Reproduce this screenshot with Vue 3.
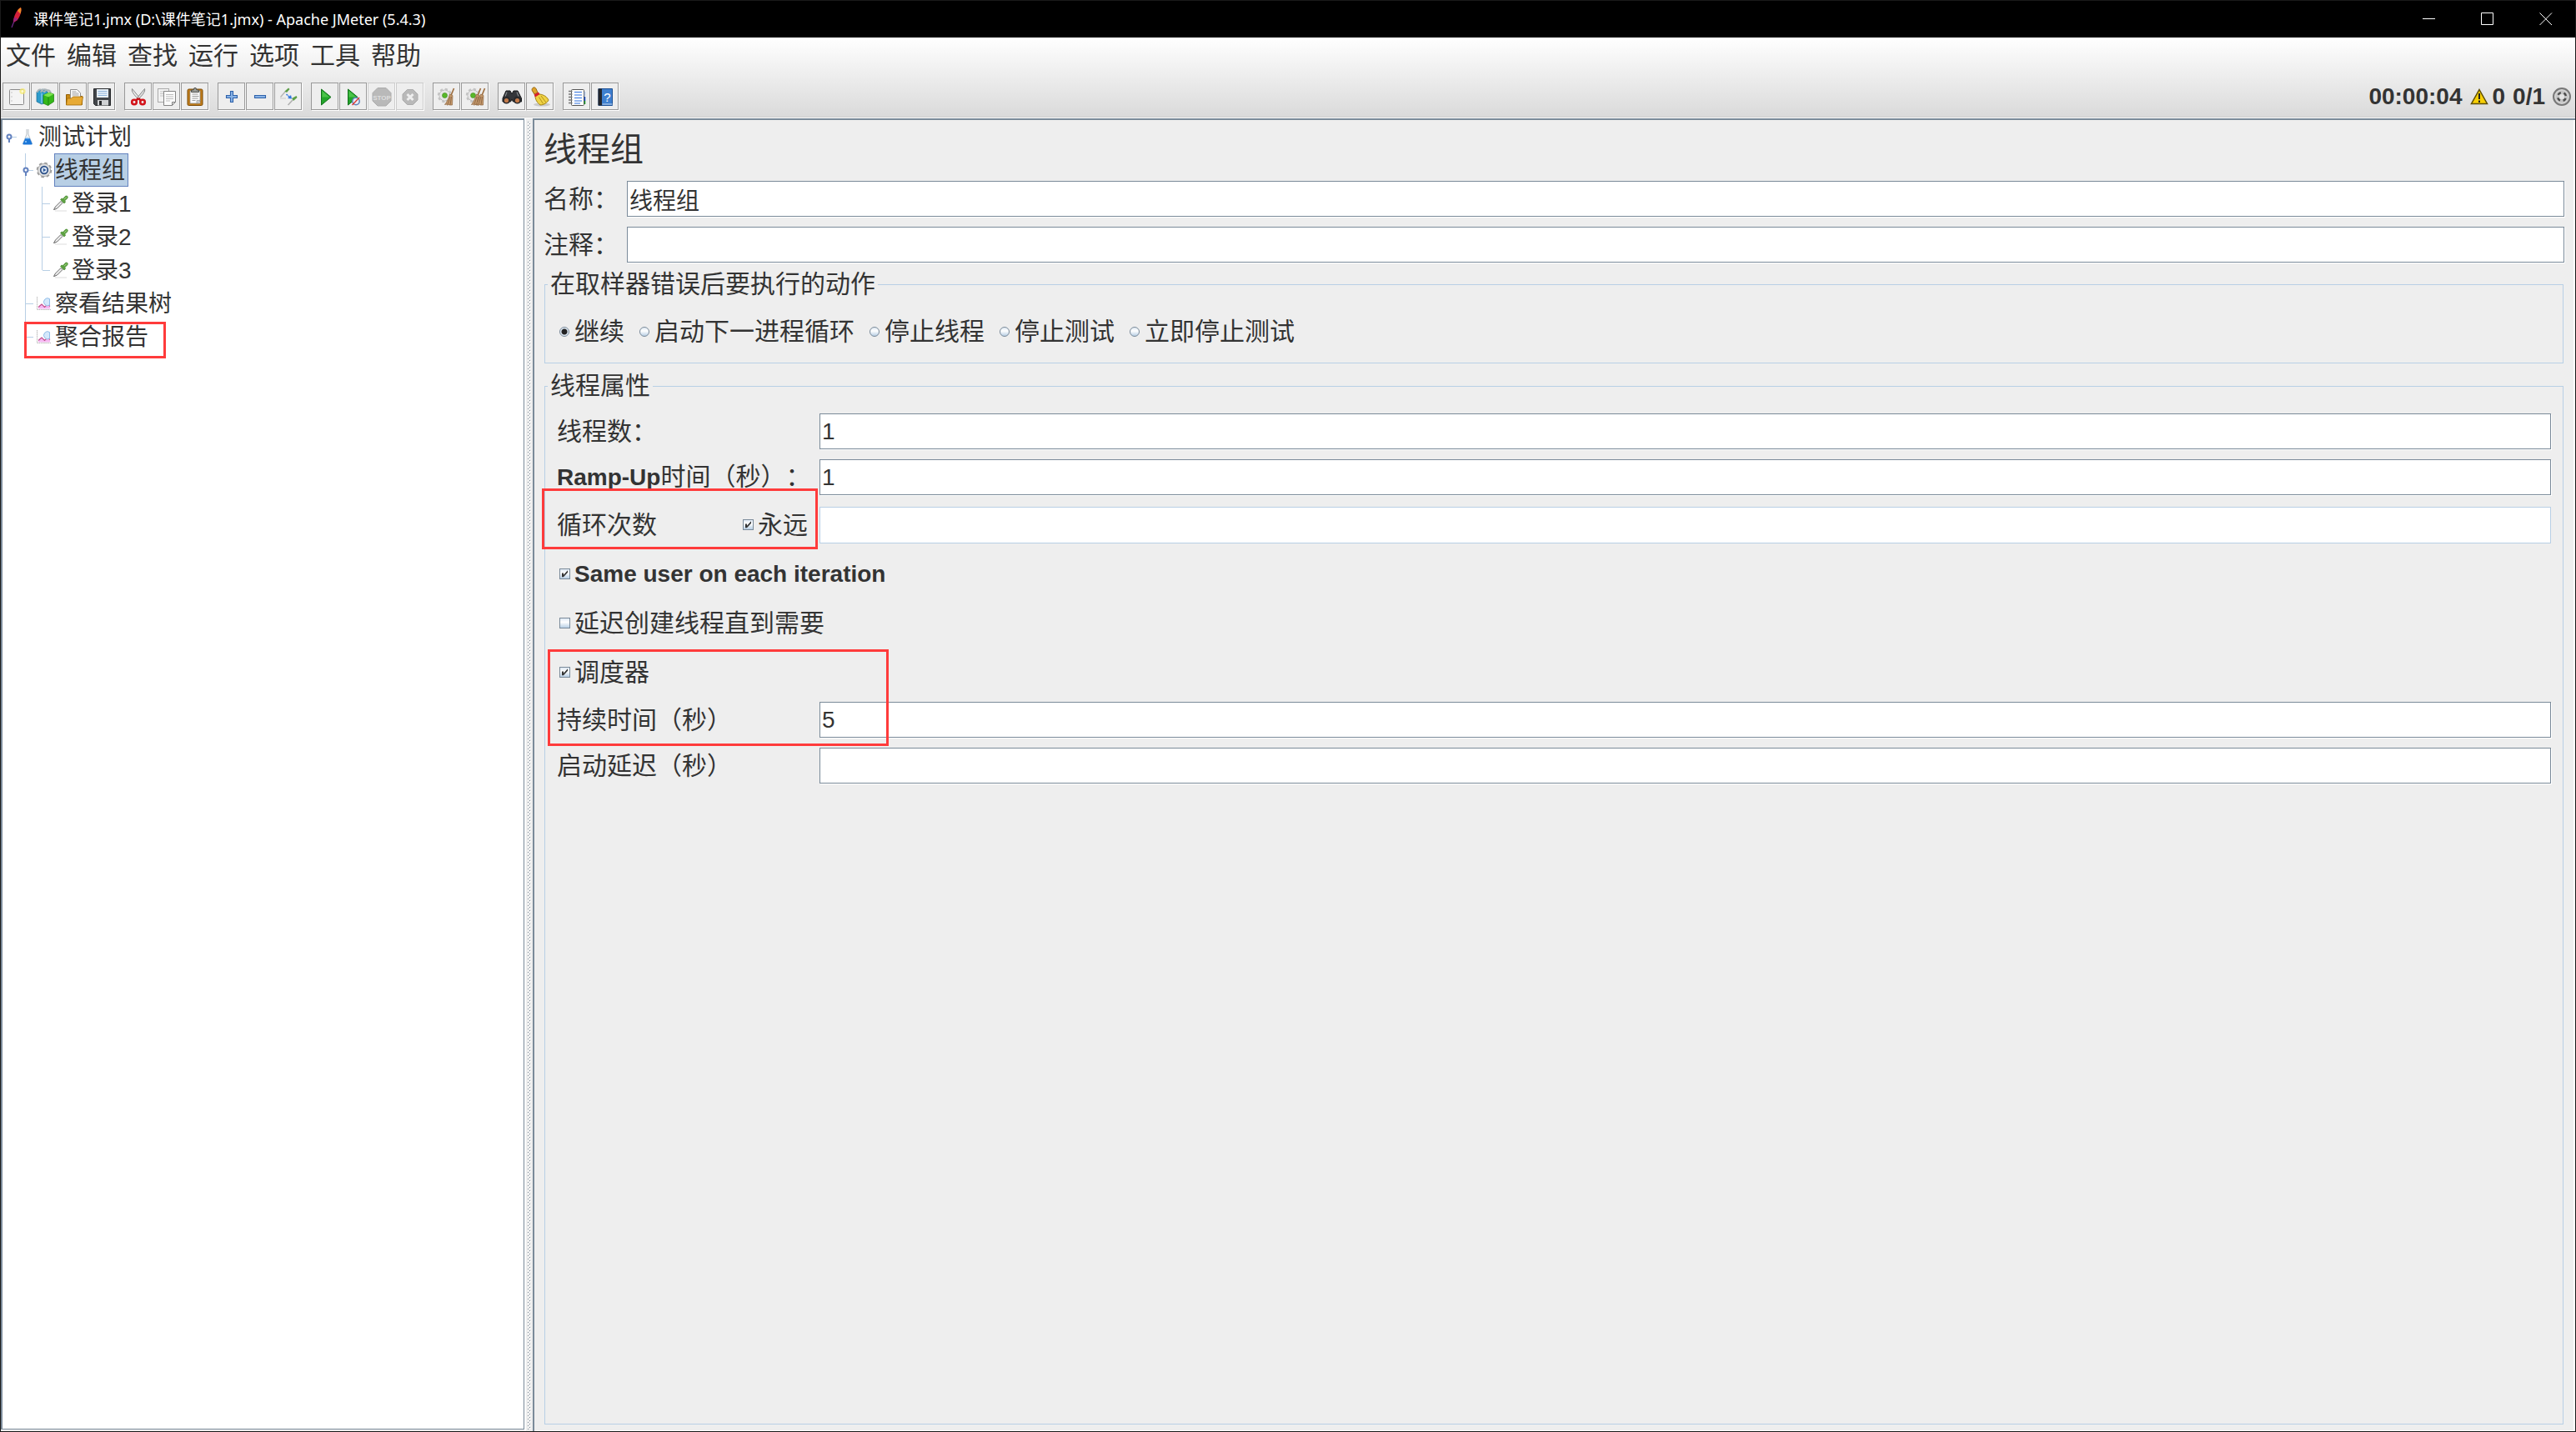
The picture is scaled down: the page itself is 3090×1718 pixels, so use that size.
<script setup>
import { ref } from 'vue'

const menus = ['文件', '编辑', '查找', '运行', '选项', '工具', '帮助']

const gear = '<g transform="translate(14.5 15.5)"><circle r="6.5" fill="#ececec" stroke="#b5b5b5"/><circle r="7.5" fill="none" stroke="#c4c4c4" stroke-width="2.4" stroke-dasharray="3.2 2.69"/><circle r="6" fill="#e6e6e6"/><circle r="3" fill="#58b82a" stroke="#3f8a1e" stroke-width=".6"/></g>'
const broom = (x) => `<g transform="translate(${x} 0)"><path d="M25.5 7L22 15.5" stroke="#9c6b3c" stroke-width="1.6"/><path d="M20.5 14l3.500 1.500-.5 11.500H20l-.5-1-1 1h-1.500l-.5-1.500-1 1H14.500c2.500-3 4.500-7.500 6-12.500z" fill="#c69a6d" stroke="#8d6540" stroke-width=".7"/><path d="M21 17l-3 9M22.5 17l-1.500 9.500" stroke="#7d5836" stroke-width=".7"/></g>`

const toolGroups = [
  [
    { name: '新建', svg: '<rect x="8.5" y="8.5" width="17" height="18" rx="1" fill="#f4f4f4" stroke="#8a8a8a"/><path d="M10.5 12h1M10.5 17h1M10.5 22h1" stroke="#999" stroke-width="1.2"/><circle cx="24" cy="10.5" r="3.6" fill="#f7e96b" opacity=".75"/><circle cx="24" cy="10.5" r="1.5" fill="#fffbd0"/>' },
    { name: '模板', svg: '<path d="M7 11l7-3 6 3v12l-7 3-6-3z" fill="#2d9ccc" stroke="#15698f" stroke-width=".7"/><path d="M8 12c0-4 5-5 7-1M12 12c1-5 7-5 9-1M16 12c1-4 6-4 8 0" fill="none" stroke="#aab4b8" stroke-width="1.8"/><path d="M13 13v12" stroke="#9fdcf5" stroke-width="1"/><path d="M15 15l7-3 5.500 2v9l-7 4.500-5.500-2.500z" fill="#35b81a" stroke="#18780b" stroke-width=".7"/><path d="M15 15l6 2.500 6.500-3.500-5.500-2z" fill="#7ce24f"/><path d="M21 17.5v10" stroke="#1b850e"/>' },
    { name: '打开', svg: '<path d="M8.5 14.500h4l1.500 2h13.500v10h-19z" fill="#c98a16" stroke="#936006"/><path d="M13.5 8.500h8l4 4V21h-12z" fill="#fafafa" stroke="#8f8f8f"/><path d="M15.5 11h5M15.5 13h8M15.5 15h8" stroke="#999" stroke-width=".9"/><path d="M8.5 27l1-8h5l2-2h12l-1.500 10z" fill="#e7aa35" stroke="#a26b08" stroke-width=".8"/>' },
    { name: '保存', svg: '<path d="M7.500 7.500h20v20H9.500l-2-2z" fill="#43464a" stroke="#26282b"/><rect x="11" y="8" width="14" height="10" fill="#e9f1f9"/><path d="M12.5 10.500h11M12.5 13h11M12.5 15.500h11" stroke="#8eb3d9"/><rect x="12" y="21" width="13" height="6.5" fill="#d0d2d4"/><rect x="14" y="22" width="3" height="5" fill="#2a2c2e"/>' },
  ],
  [
    { name: '剪切', svg: '<path d="M9.500 7.500c-1 3 2 7 7.500 12.500l1.500-1.500z" fill="#eee" stroke="#858585"/><path d="M24.500 7.500c1 3-2 7-7.500 12.500l-1.500-1.500z" fill="#e2e2e2" stroke="#858585"/><path d="M17 19l3.500 3M17 19l-3.500 3" stroke="#c50d14" stroke-width="2.5"/><ellipse cx="12" cy="23.5" rx="2.8" ry="2.7" fill="none" stroke="#d3141b" stroke-width="2.6"/><ellipse cx="22" cy="23.5" rx="2.8" ry="2.7" fill="none" stroke="#d3141b" stroke-width="2.6"/>' },
    { name: '复制', svg: '<rect x="6.5" y="7.5" width="13" height="16" fill="#f2f2f2" stroke="#aaa"/><path d="M9 11h8M9 13.500h4M9 16h4" stroke="#c5c5c5"/><path d="M13.5 10.500h14v13l-4 4h-10z" fill="#fafafa" stroke="#858585"/><path d="M16 14.500h9M16 17h9M16 19.500h9M16 22h5" stroke="#bdbdbd"/><path d="M23.5 27.500v-4h4z" fill="#ddd" stroke="#858585"/>' },
    { name: '粘贴', svg: '<rect x="8" y="8" width="18" height="19.5" rx="1.5" fill="#c07c1a" stroke="#7c4a05"/><path d="M11 10h12v15H11z" fill="#f9f9f9" stroke="#888" stroke-width=".7"/><path d="M13.5 14h7M13.5 16.500h8M13.5 19h7M13.5 21.500h4" stroke="#9c9c9c"/><path d="M19 25.500v-4h4.500z" fill="#d5d5d5" stroke="#888" stroke-width=".6"/><path d="M12.5 11.500V9h2.500l1-2.500h2L19 9h2.500v2.500z" fill="#9a9c98" stroke="#50524e"/>' },
  ],
  [
    { name: '展开', svg: '<path d="M15.5 10.500h3v5h5v3h-5v5h-3v-5h-5v-3h5z" fill="#8ab4e6" stroke="#2f62aa" stroke-width="1.1"/>' },
    { name: '折叠', svg: '<path d="M10.5 15.500h13v3h-13z" fill="#8ab4e6" stroke="#2f62aa" stroke-width="1.1"/>' },
    { name: '切换', svg: '<path d="M7.500 17.500l6-7" stroke="#b5b5b5" stroke-width="1.4"/><path d="M12.500 10.500l4.500-4 1.500 1.500-3.500 4z" fill="#5c9e47"/><path d="M7 19h7" stroke="#ccc"/><path d="M14.500 14l4 3.500" stroke="#2f75e0" stroke-width="1.5" stroke-dasharray="2 .8"/><path d="M21 19.500l-1-4.500-4 4z" fill="#2f75e0"/><path d="M16.500 27l5.500-6" stroke="#b0b0b0" stroke-width="1.6"/><path d="M21 19l5.500-3 1 2-4.500 4z" fill="#5c9e47"/>' },
  ],
  [
    { name: '启动', svg: '<path d="M12.5 8v19L24 17.500z" fill="#23a52b" stroke="#12711a"/><path d="M13.5 10v7.500H22z" fill="#58cd54" opacity=".75"/>' },
    { name: '不停顿开始', svg: '<path d="M10.5 8v19L22 17.500z" fill="#23a52b" stroke="#12711a"/><path d="M11.5 10v7.500H20z" fill="#58cd54" opacity=".75"/><circle cx="20" cy="22.5" r="4.2" fill="#e8edf7" stroke="#5f83bb" stroke-width="1.5"/><path d="M15.5 27l8.500-9" stroke="#e23a32" stroke-width="1.4"/>' },
    { name: '停止', disabled: true, svg: '<path d="M12 6.500h10l6 6v9.500l-6 6H12l-6-6v-9.500z" fill="#b9b9b9" stroke="#acacac"/><text x="17" y="21" text-anchor="middle" font-family="Liberation Sans" font-weight="700" font-size="8" fill="#dedede">STOP</text>' },
    { name: '关闭', disabled: true, svg: '<path d="M13.5 8.500h7l5.500 5.500v7l-5.500 5.500h-7L8 21v-7z" fill="#b9b9b9" stroke="#acacac"/><path d="M13.5 14l7 7M20.5 14l-7 7" stroke="#eee" stroke-width="3"/>' },
  ],
  [
    { name: '清除', svg: gear + broom(0) },
    { name: '清除全部', svg: gear + broom(-2) + broom(3) },
  ],
  [
    { name: '查找', svg: '<path d="M10 10h5l1.500 3h1L19 10h5l4.500 9v4h-10l-1.500-3-1.500 3H6v-4z" fill="#34363a" stroke="#17181a"/><circle cx="10.5" cy="21" r="4.5" fill="#292a2d"/><circle cx="23.5" cy="21" r="4.5" fill="#292a2d"/><circle cx="10.5" cy="21.5" r="2.6" fill="#c37a4a"/><circle cx="23.5" cy="21.5" r="2.6" fill="#c37a4a"/><path d="M11 11.500l-2 5M23 11.500l2 5" stroke="#85888d" stroke-width="1.2"/>' },
    { name: '重置查找', svg: '<ellipse cx="19" cy="26.5" rx="10" ry="2" fill="#c9c9c9"/><path d="M8 6.500c2-1.500 3.500 0 4 1l2 4.500-4 2-2.500-4c-.7-1-.5-2.500.5-3.500z" fill="#e0a32a" stroke="#956612"/><path d="M15 14c4 0 9 1.500 12 7-1 2.500-5 6-10 6-4-3-6-7-6-11z" fill="#efd245" stroke="#a58412"/><path d="M15.5 17.500l5 8M18 16l6 8" stroke="#b49319"/><path d="M9.500 14.500l5.500-3 1.500 2.500-5.500 3.500z" fill="#d8202b"/>' },
  ],
  [
    { name: '函数助手对话框', svg: '<rect x="10.5" y="8.5" width="15" height="19" rx="1" fill="#fff" stroke="#555"/><path d="M26.5 11v5" stroke="#b0c4e6" stroke-width="1.5"/><path d="M26.5 17v5" stroke="#1d4fc4" stroke-width="1.5"/><path d="M26.5 22v4" stroke="#1f9a30" stroke-width="1.5"/><path d="M14 11.500h9M14 15h9M14 18.500h9M14 22h9M14 25h7" stroke="#2f70dd" stroke-width="1.2"/><path d="M7 10.500h4.500M7 14h4.500M7 17.500h4.500M7 21h4.500M7 24.500h4.500" stroke="#777" stroke-width="1.5"/>' },
    { name: '帮助', svg: '<path d="M9 7.500h16.500v20H9z" fill="#3f80cf" stroke="#1c4f93"/><path d="M8.500 7.500H13v20H8.500z" fill="#22262d"/><path d="M13.5 26h12" stroke="#cfdcf0"/><text x="19.5" y="22.5" text-anchor="middle" font-family="Liberation Sans" font-size="15" fill="#fff">?</text>' },
  ],
]

const treeIcons = {
  plan: '<path d="M9 1v6L4.500 18.500h11L11 7V1" fill="#eef2f5" stroke="#b5bcc2" stroke-width=".9"/><path d="M7.300 12h5.400l2.800 6q.5 1.500-1 1.500h-9q-1.500 0-1-1.500z" fill="#1c77d8"/><ellipse cx="10" cy="12" rx="2.6" ry=".8" fill="#7cbcf5"/><circle cx="8" cy="16" r="1" fill="#9fd0fb"/>',
  group: '<circle cx="10" cy="10" r="8.3" fill="none" stroke="#9a9a9a" stroke-width="2" stroke-dasharray="3.6 2.92"/><circle cx="10" cy="10" r="7.6" fill="#e2e2e2" stroke="#a5a5a5" stroke-width=".9"/><circle cx="10" cy="10" r="4.3" fill="#dbe6f5" stroke="#2c4f86" stroke-width="1.7"/><path d="M8.800 7.700v4.600l3.600-2.300z" fill="#2f5b9e"/>',
  sampler: '<path d="M3 19h14" stroke="#ddd"/><path d="M1.500 17.500l2-3.500 6.500-6.500 2 2-6.500 6.500-3.500 1.500z" fill="#f0f0f0" stroke="#555" stroke-width=".9"/><path d="M9.500 5.500l4.500 4.500 1.500-1.500-.7-1.700 3.200-3c1-2-.5-3.500-2.500-2.500l-3 3.200-1.500-.5z" fill="#5da142" stroke="#4a8a33" stroke-width=".7"/><path d="M14 5l3-2.500" stroke="#a5dc86"/>',
  report: '<path d="M1.500 2v15.500H18" fill="none" stroke="#b9b9b9" stroke-dasharray="1.5 .7"/><path d="M3 16.500v-3l4-3 4 3.500 3-3 3 2v3.500z" fill="#f5b9f3"/><path d="M3 14.500l4-3.500 3.500 3.500 3.500-3.500 3 2.500" fill="none" stroke="#c2508a" stroke-width="1.1"/><path d="M16.500 4.500a4.500 4.500 0 1 0 0 7.500z" fill="#d5e8fb" stroke="#90bde8" stroke-width="1"/>',
}

// guides: one cell per depth level, drawn from left to right
const tree = [
  { text: '测试计划', icon: 'plan', guides: ['root'] },
  { text: '线程组', icon: 'group', guides: ['none', 'handle'], selected: true },
  { text: '登录1', icon: 'sampler', guides: ['none', 'line', 'tee'] },
  { text: '登录2', icon: 'sampler', guides: ['none', 'line', 'tee'] },
  { text: '登录3', icon: 'sampler', guides: ['none', 'line', 'end'] },
  { text: '察看结果树', icon: 'report', guides: ['none', 'tee'] },
  { text: '聚合报告', icon: 'report', guides: ['none', 'end'], marked: true },
]

const onErrorOptions = ['继续', '启动下一进程循环', '停止线程', '停止测试', '立即停止测试']
const onError = ref('继续')
const name = ref('线程组')
const comment = ref('')
const threads = ref('1')
const rampUp = ref('1')
const loops = ref('')
const forever = ref(true)
const sameUser = ref(true)
const delayed = ref(false)
const scheduler = ref(true)
const duration = ref('5')
const startDelay = ref('')
</script>

<template>
  <div class="window">
    <header class="titlebar">
      <svg class="feather" width="14" height="26" viewBox="0 0 14 26">
        <path d="M1 25L4.500 16" stroke="#6f2a8c" stroke-width="1.2" />
        <path d="M3 19C3 12 7 3 12 1c1.500 4-1 11-4.500 15.500z" fill="#d4203a" />
        <path d="M8 5c1.500-2.500 3-3.700 4-4 .9 2.400.3 5-.5 7.500z" fill="#f08a24" />
        <path d="M3 19c0-2.500.5-4.500 1.200-6.500l4.300 2-1 1.500z" fill="#97247c" />
      </svg>
      <h1 class="caption">课件笔记1.jmx (D:\课件笔记1.jmx) - Apache JMeter (5.4.3)</h1>
      <div class="window-buttons">
        <button type="button" aria-label="最小化"><svg width="16" height="16"><path d="M0 7.500h15" /></svg></button>
        <button type="button" aria-label="最大化"><svg width="16" height="16"><path d="M.5.5h14v14H.5z" /></svg></button>
        <button type="button" aria-label="关闭"><svg width="16" height="16"><path d="M.5.5l14.500 14.500M15 .5L.5 15" /></svg></button>
      </div>
    </header>

    <div class="chrome">
      <nav class="menubar">
        <button v-for="m in menus" :key="m" type="button">{{ m }}</button>
      </nav>
      <div class="toolbar">
        <div v-for="(group, g) in toolGroups" :key="g" class="tool-group">
          <button v-for="t in group" :key="t.name" type="button" :aria-label="t.name" :disabled="t.disabled">
            <svg width="31" height="31" viewBox="1 1 31 31" fill="none" v-html="t.svg"></svg>
          </button>
        </div>
        <div class="status">
          <span class="clock">00:00:04</span>
          <svg class="warning" width="22" height="20" viewBox="0 0 22 20">
            <path d="M11 1.500L20.500 18.500h-19z" fill="#f7cf05" stroke="#5c4c00" stroke-width="1.5" />
            <path d="M11 6v7M11 14.500v2.500" stroke="#222" stroke-width="2" />
          </svg>
          <span class="errors">0</span>
          <span class="active">0/1</span>
          <svg width="22" height="22" viewBox="0 0 22 22">
            <circle cx="11" cy="11" r="10" fill="#d2d2d2" stroke="#787878" stroke-width="2" />
            <circle cx="11" cy="11" r="7" fill="#c4c4c4" />
            <circle cx="11" cy="11" r="5" fill="none" stroke="#4c4c4c" stroke-width="2.5" stroke-dasharray="4 3.85" stroke-dashoffset="-2" />
            <circle cx="11" cy="11" r="3" fill="#e4e4e4" />
          </svg>
        </div>
      </div>
    </div>

    <div class="workspace">
      <aside class="tree">
        <ul>
          <li v-for="node in tree" :key="node.text">
            <svg v-for="(kind, i) in node.guides" :key="i" class="guide" width="20" height="40" viewBox="0 0 20 40">
              <path v-if="kind === 'line' || kind === 'tee' || kind === 'handle'" d="M7.500 0v40" />
              <path v-if="kind === 'end'" d="M7.500 0v20" />
              <path v-if="kind !== 'line' && kind !== 'none'" d="M8 20.500h9" />
              <g v-if="kind === 'root' || kind === 'handle'" class="knob">
                <path d="M8 22v5" />
                <circle cx="8" cy="20" r="2.5" />
              </g>
            </svg>
            <svg class="node-icon" width="20" height="20" viewBox="0 0 20 20" fill="none" v-html="treeIcons[node.icon]"></svg>
            <span class="node-label" :class="{ selected: node.selected }">{{ node.text }}</span>
            <i v-if="node.marked" class="mark mark-report"></i>
          </li>
        </ul>
      </aside>

      <div class="divider">
        <svg width="4" height="100%">
          <defs>
            <pattern id="grip" width="4" height="4" patternUnits="userSpaceOnUse">
              <path d="M0 0h1v1H0zM2 2h1v1H2z" fill="#7a8a99" />
              <path d="M1 1h1v1H1zM3 3h1v1H3z" fill="#fff" />
            </pattern>
          </defs>
          <rect width="4" height="100%" fill="url(#grip)" />
        </svg>
      </div>

      <main class="editor">
        <h2>线程组</h2>
        <div class="head-row">
          <label for="name">名称：</label>
          <input id="name" v-model="name" type="text" />
        </div>
        <div class="head-row">
          <label for="comment">注释：</label>
          <input id="comment" v-model="comment" type="text" />
        </div>

        <fieldset>
          <legend>在取样器错误后要执行的动作</legend>
          <div class="radios">
            <label v-for="o in onErrorOptions" :key="o">
              <input v-model="onError" type="radio" name="on-error" :value="o" />{{ o }}
            </label>
          </div>
        </fieldset>

        <fieldset class="properties">
          <legend>线程属性</legend>
          <div class="rows">
            <div class="row">
              <label for="threads">线程数：</label>
              <input id="threads" v-model="threads" type="text" />
            </div>
            <div class="row">
              <label for="ramp"><b>Ramp-Up</b>时间（秒）：</label>
              <input id="ramp" v-model="rampUp" type="text" />
            </div>
            <div class="row loop">
              <div class="loop-label">
                <label for="loops">循环次数</label>
                <label class="check"><input v-model="forever" type="checkbox" />永远</label>
              </div>
              <input id="loops" v-model="loops" type="text" :disabled="forever" />
              <i class="mark mark-loop"></i>
            </div>
            <label class="check check-row"><input v-model="sameUser" type="checkbox" /><b>Same user on each iteration</b></label>
            <label class="check check-row"><input v-model="delayed" type="checkbox" />延迟创建线程直到需要</label>
            <div class="schedule">
              <label class="check check-row"><input v-model="scheduler" type="checkbox" />调度器</label>
              <div class="row">
                <label for="duration">持续时间（秒）</label>
                <input id="duration" v-model="duration" type="text" />
              </div>
              <i class="mark mark-schedule"></i>
            </div>
            <div class="row">
              <label for="delay">启动延迟（秒）</label>
              <input id="delay" v-model="startDelay" type="text" />
            </div>
          </div>
        </fieldset>
      </main>
    </div>
  </div>
</template>

<style>
body {
  margin: 0;
  background: #eee;
}
</style>

<style scoped>
* {
  box-sizing: border-box;
}
.window {
  display: flex;
  flex-direction: column;
  height: 100vh;
  border: 1px solid #1a1a1a;
  background: #eee;
  color: #333;
  font-family: "Liberation Sans", "Noto Sans CJK SC", sans-serif;
  font-size: 30px;
  line-height: 40px;
  text-spacing-trim: space-all;
}
button {
  margin: 0;
  padding: 0;
  border: 0;
  background: none;
  color: inherit;
  font: inherit;
}

.titlebar {
  display: flex;
  align-items: center;
  height: 44px;
  padding-left: 12px;
  background: #000;
  color: #fff;
}
.feather {
  margin-top: -4px;
}
.caption {
  flex: 1;
  margin: 0 0 0 13px;
  font: 400 18px/24px "Noto Sans", "Noto Sans CJK SC", sans-serif;
}
.window-buttons {
  display: flex;
}
.window-buttons button {
  display: flex;
  align-items: center;
  justify-content: center;
  width: 70px;
  height: 44px;
}
.window-buttons svg {
  fill: none;
  stroke: #fff;
}

.chrome {
  border-bottom: 1px solid #ccc;
  background: linear-gradient(#fff, #dadada);
}
.menubar {
  display: flex;
  gap: 13px;
  height: 43px;
  padding-left: 6px;
}
.toolbar {
  display: flex;
  gap: 11px;
  height: 52px;
  padding: 11px 5px 8px 2px;
}
.tool-group {
  display: flex;
  gap: 1px;
}
.tool-group button {
  width: 33px;
  height: 33px;
  border: 1px solid #999;
  background: #eee;
  box-shadow: 1px 1px 0 #fff;
}
.tool-group button:disabled {
  border-color: #ccc;
}
.tool-group svg {
  display: block;
}
.status {
  display: flex;
  align-items: center;
  height: 33px;
  margin-left: auto;
  font-size: 28px;
  font-weight: 700;
}
.warning {
  margin: 0 4px 0 10px;
}
.errors {
  margin-right: 9px;
}
.active {
  margin-right: 9px;
}

.workspace {
  display: flex;
  flex: 1;
  min-height: 0;
  border-top: 1px solid #fff;
}
.tree {
  width: 628px;
  margin-bottom: 2px;
  border: solid #7a8a99;
  border-width: 2px 1px 1px 2px;
  background: #fff;
}
.tree ul {
  margin: 0;
  padding: 0;
  list-style: none;
}
.tree li {
  position: relative;
  display: flex;
  align-items: center;
  height: 40px;
}
.guide {
  flex: none;
  fill: none;
  stroke: #b8cfe5;
}
.knob {
  fill: #fff;
  stroke: #6382bf;
  stroke-width: 2;
}
.node-icon {
  flex: none;
}
.node-label {
  height: 40px;
  margin-left: 2px;
  padding: 0 3px 0 0;
  border: 1px solid transparent;
  font-size: 28px;
  line-height: 40px;
}
.node-label.selected {
  border-color: #6382bf;
  background: #b8cfe5;
}

.divider {
  display: flex;
  justify-content: center;
  width: 10px;
  padding: 4px 0 2px;
  border-left: 2px solid #fff;
}
.editor {
  display: flex;
  flex: 1;
  flex-direction: column;
  min-width: 0;
  padding: 0 13px 8px 11px;
  border: solid #7a8a99;
  border-width: 2px 0 0 2px;
  box-shadow: inset -2px -1px 0 #fff;
}
h2 {
  height: 67px;
  margin: 0;
  font-size: 40px;
  font-weight: 400;
  line-height: 70px;
}
.head-row,
.row {
  display: flex;
  align-items: center;
  height: 55px;
}
.head-row label {
  width: 100px;
}
input[type="text"] {
  flex: 1;
  min-width: 0;
  height: 43px;
  margin: 0;
  padding: 0 2px;
  border: 1px solid #7a8a99;
  border-radius: 0;
  background: #fff;
  box-shadow: 1px 1px 0 #fff;
  color: #333;
  font: inherit;
  font-size: 28px;
}
input[type="text"]:disabled {
  height: 44px;
  border-color: #b8cfe5;
  box-shadow: none;
}
fieldset {
  min-width: 0;
  margin: 0 1px 7px;
  padding: 0;
  border: 1px solid #b8cfe5;
}
legend {
  margin-left: 3px;
  padding: 0 3px;
}
.radios {
  display: flex;
  align-items: center;
  gap: 18px;
  height: 74px;
  padding-left: 17px;
}
.radios label {
  display: flex;
  align-items: center;
  gap: 6px;
}
input[type="radio"],
input[type="checkbox"] {
  appearance: none;
  flex: none;
  margin: 0;
  border: 1px solid #7a8a99;
  background: linear-gradient(#dfe9f4, #fff 40%, #b8cfe5);
}
input[type="radio"] {
  width: 12px;
  height: 12px;
  border-radius: 50%;
}
input[type="radio"]:checked {
  background: radial-gradient(circle, #222 3px, #dfe9f4 4px);
}
input[type="checkbox"] {
  position: relative;
  width: 13px;
  height: 13px;
}
input[type="checkbox"]:checked::after {
  position: absolute;
  inset: 0;
  background: #333;
  clip-path: polygon(18% 40%, 36% 40%, 36% 62%, 82% 12%, 82% 34%, 36% 84%, 18% 84%);
  content: "";
}
.properties {
  flex: 1;
  margin-bottom: 0;
}
.rows {
  padding: 7px 14px 0;
}
.row > label,
.loop-label {
  flex: none;
  width: 315px;
}
b {
  font-size: 28px;
  font-weight: 700;
}
.check {
  display: flex;
  align-items: center;
  gap: 5px;
}
.check-row {
  height: 59px;
  padding-left: 3px;
}
.loop {
  position: relative;
  height: 59px;
}
.loop-label {
  display: flex;
  justify-content: space-between;
  padding-right: 14px;
}
.schedule {
  position: relative;
}

/* red call-out frames laid over the interface */
.mark {
  position: absolute;
  border: 3px solid #ff3b3b;
  pointer-events: none;
}
.mark-report {
  top: 2px;
  left: 26px;
  width: 170px;
  height: 44px;
}
.mark-loop {
  top: -14px;
  left: -18px;
  width: 331px;
  height: 73px;
}
.mark-schedule {
  top: 2px;
  left: -11px;
  width: 409px;
  height: 116px;
}
</style>
